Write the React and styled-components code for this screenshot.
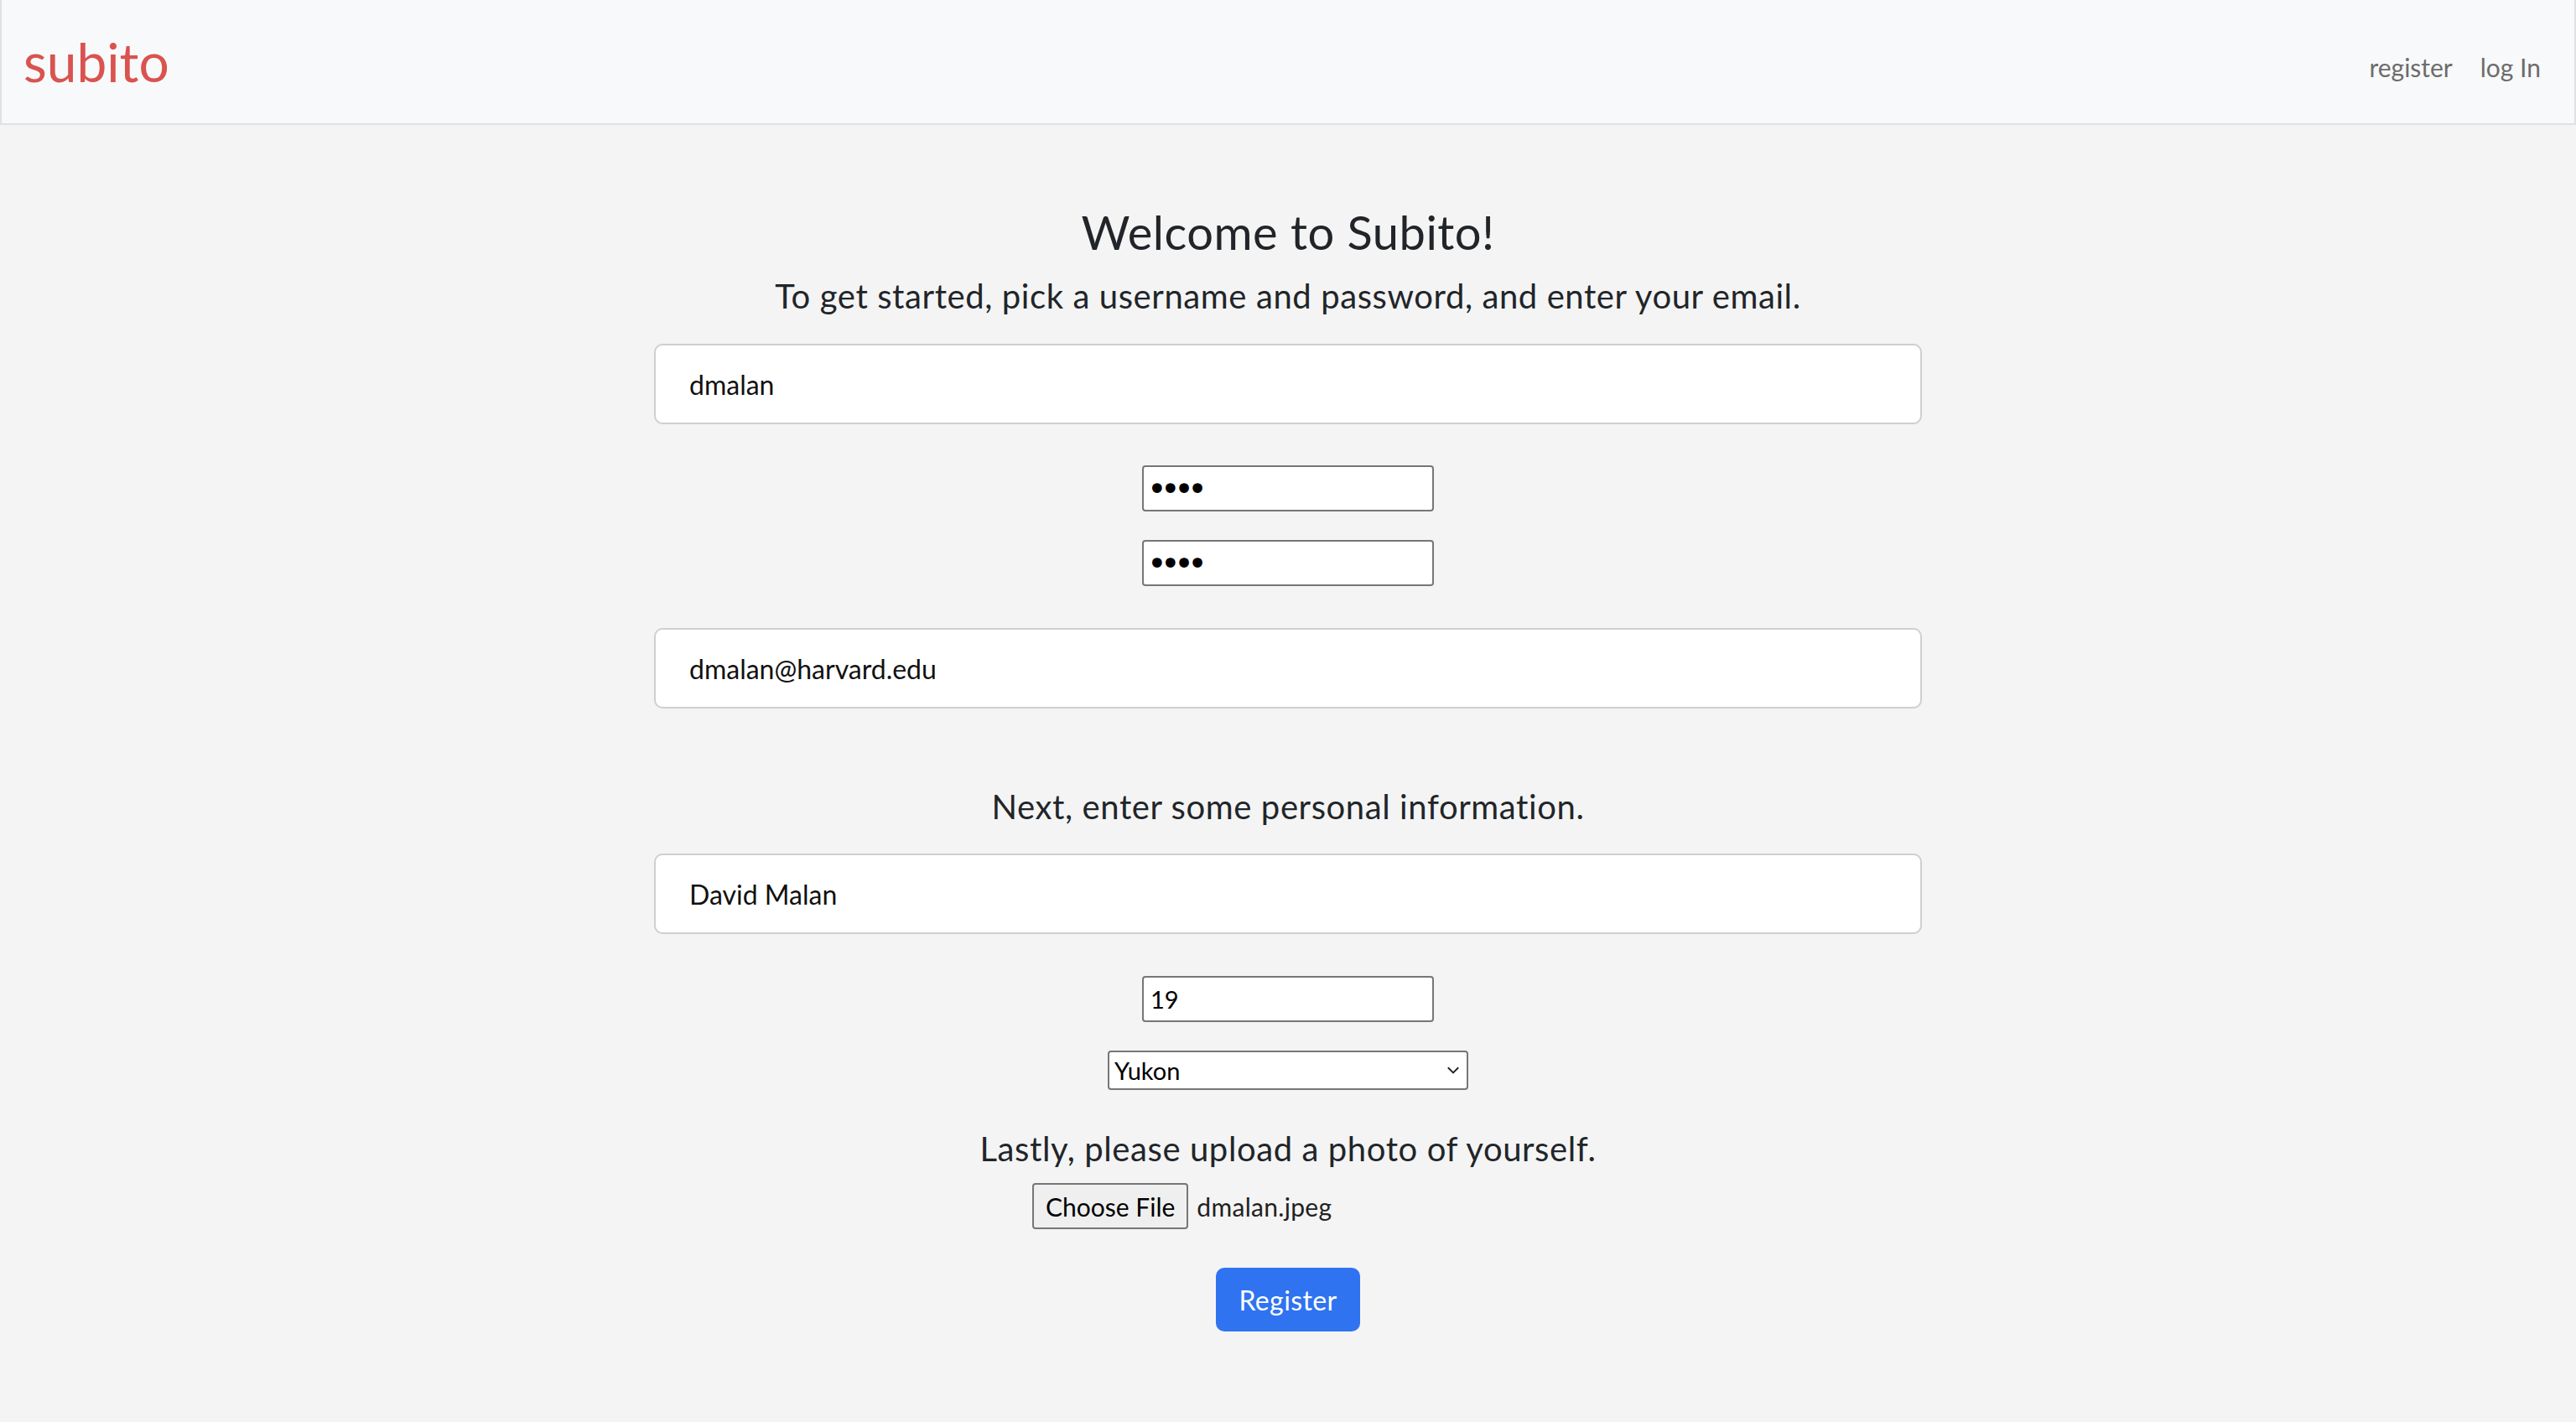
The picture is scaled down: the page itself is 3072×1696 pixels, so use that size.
import styled, { createGlobalStyle } from "styled-components";

const GlobalStyle = createGlobalStyle`
  html, body {
    margin: 0;
    padding: 0;
    background: #f4f4f4;
  }
  body {
    font-family: "Lato", "Noto Sans", sans-serif;
    color: #212529;
  }
  * { box-sizing: border-box; }
`;

export default function App() {
  return (
    <>
      <GlobalStyle />
      <NavBar>
        <Brand>subito</Brand>
        <NavLinks>
          <NavLink href="#">register</NavLink>
          <NavLink href="#">log In</NavLink>
        </NavLinks>
      </NavBar>
      <Main>
        <Form onSubmit={(e) => e.preventDefault()}>
          <Title>Welcome to Subito!</Title>
          <Lead $top={19}>To get started, pick a username and password, and enter your email.</Lead>
          <WideInput $top={33} defaultValue="dmalan" />
          <SmallInput $top={49} type="password" defaultValue="abcd" />
          <SmallInput $top={34} type="password" defaultValue="abcd" />
          <WideInput $top={50} defaultValue="dmalan@harvard.edu" />

          <Lead $top={93}>Next, enter some personal information.</Lead>
          <WideInput $top={32} defaultValue="David Malan" />
          <SmallInput $top={50} defaultValue="19" />
          <SelectWrap $top={34}>
            <Select defaultValue="Yukon">
              <option>Yukon</option>
            </Select>
            <Chevron viewBox="0 0 16 16">
              <path d="M3.5 6 L8 10.5 L12.5 6" fill="none" stroke="#222" strokeWidth="1.4" />
            </Chevron>
          </SelectWrap>

          <Lead $top={46}>Lastly, please upload a photo of yourself.</Lead>
          <FileRow $top={17}>
            <FileButton type="button">Choose File</FileButton>
            <FileName>dmalan.jpeg</FileName>
          </FileRow>

          <SubmitButton $top={46} type="submit">Register</SubmitButton>
        </Form>
      </Main>
    </>
  );
}

const NavBar = styled.nav`
  height: 149px;
  background: #f8f9fa;
  border: 2px solid #dee2e6;
  border-top: 0;
  display: flex;
  align-items: center;
  justify-content: space-between;
  padding: 0 40px 0 26px;
`;

const Brand = styled.a`
  font-size: 64px;
  color: #d9534f;
  text-decoration: none;
`;

const NavLinks = styled.div`
  display: flex;
  gap: 33px;
  margin-top: 12px;
`;

const NavLink = styled.a`
  font-size: 30px;
  color: #6c6c6c;
  text-decoration: none;
`;

const Main = styled.main`
  padding-top: 94px;
  display: flex;
  justify-content: center;
`;

const Form = styled.form`
  width: 1512px;
  display: flex;
  flex-direction: column;
  align-items: center;
`;

const Title = styled.h1`
  margin: 0;
  font-size: 56px;
  line-height: 67px;
  font-weight: 400;
  letter-spacing: 0.5px;
`;

const Lead = styled.p`
  margin: ${(p) => p.$top}px 0 0;
  font-size: 40px;
  line-height: 48px;
  letter-spacing: 0.6px;
`;

const WideInput = styled.input`
  margin-top: ${(p) => p.$top}px;
  width: 100%;
  height: 96px;
  padding: 0 40px;
  border: 2px solid #cfcfcf;
  border-radius: 10px;
  background: #fff;
  font-family: "Lato", sans-serif;
  font-size: 32px;
  color: #111;
  outline: none;
`;

const SmallInput = styled.input`
  margin-top: ${(p) => p.$top}px;
  width: 348px;
  height: 55px;
  padding: 0 8px;
  border: 2px solid #767676;
  border-radius: 4px;
  background: #fff;
  font-family: "Lato", sans-serif;
  font-size: 29px;
  color: #000;
  outline: none;

  &[type="password"] {
    font-family: "DejaVu Sans", sans-serif;
    font-size: 40px;
    letter-spacing: -7.5px;
    padding-left: 4px;
  }
`;

const SelectWrap = styled.div`
  margin-top: ${(p) => p.$top}px;
  position: relative;
  width: 430px;
  height: 47px;
`;

const Select = styled.select`
  appearance: none;
  width: 100%;
  height: 100%;
  padding: 0 40px 0 6px;
  border: 2px solid #767676;
  border-radius: 4px;
  background: #fff;
  font-family: "Lato", sans-serif;
  font-size: 29px;
  color: #000;
  outline: none;
`;

const Chevron = styled.svg`
  position: absolute;
  right: 7px;
  top: 12px;
  width: 22px;
  height: 22px;
  pointer-events: none;
`;

const FileRow = styled.div`
  margin-top: ${(p) => p.$top}px;
  width: 610px;
  display: flex;
  align-items: center;
  gap: 10px;
`;

const FileButton = styled.button`
  height: 55px;
  padding: 0 14px;
  border: 2px solid #767676;
  border-radius: 4px;
  background: #efefef;
  font-family: "Lato", sans-serif;
  font-size: 30px;
  color: #000;
`;

const FileName = styled.span`
  font-size: 30px;
  color: #222;
  letter-spacing: 0.3px;
`;

const SubmitButton = styled.button`
  margin-top: ${(p) => p.$top}px;
  width: 172px;
  height: 76px;
  border: 0;
  border-radius: 10px;
  background: #2f73f1;
  color: #fff;
  font-family: "Lato", sans-serif;
  font-size: 32px;
  letter-spacing: 0.4px;
`;
